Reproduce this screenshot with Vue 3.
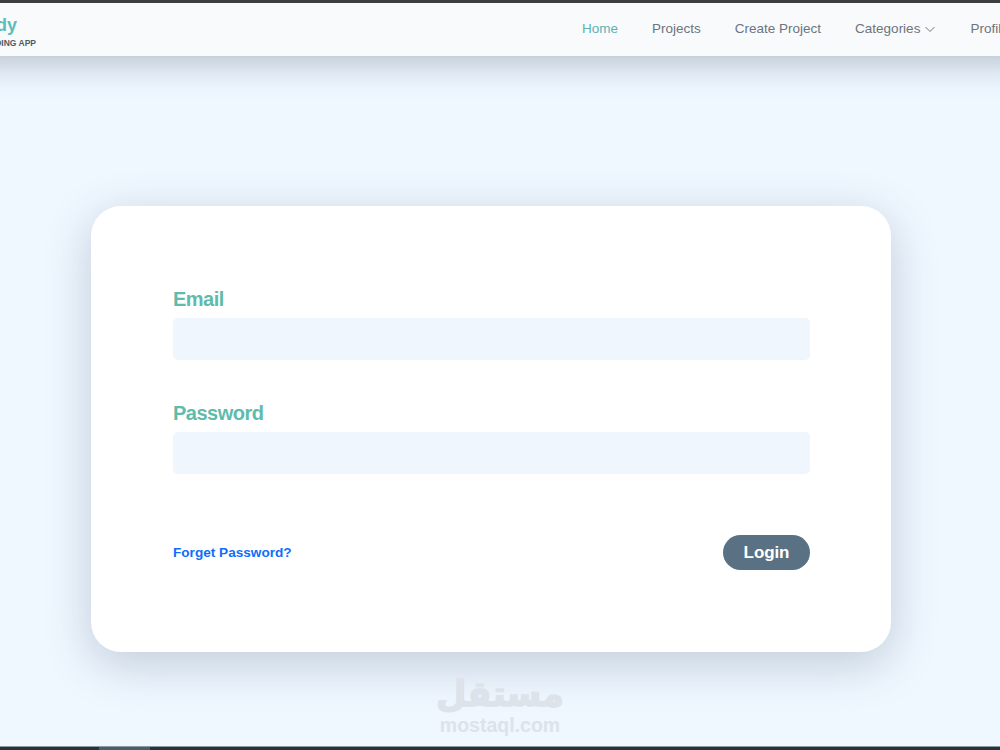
<template>
  <div class="page">
    <div class="top-strip"></div>

    <header class="navbar">
      <a class="logo" href="#">
        <span class="logo__name">Fundy</span>
        <span class="logo__tag">CROWDFUNDING APP</span>
      </a>
      <nav class="nav">
        <a
          v-for="link in links"
          :key="link.label"
          class="nav__link"
          :class="{ 'nav__link--active': link.active }"
          href="#"
        >
          {{ link.label }}
          <svg v-if="link.caret" class="nav__caret" width="12" height="12" viewBox="0 0 12 12" fill="none">
            <path d="M1.5 4 L6 8.5 L10.5 4" stroke="#6f777d" stroke-width="1" />
          </svg>
        </a>
      </nav>
    </header>

    <main class="main">
      <form class="card" @submit.prevent>
        <label class="field">
          <span class="field__label">Email</span>
          <input v-model="email" class="field__input" type="email" />
        </label>
        <label class="field">
          <span class="field__label">Password</span>
          <input v-model="password" class="field__input" type="password" />
        </label>
        <div class="card__footer">
          <a class="forget" href="#">Forget Password?</a>
          <button class="login" type="submit">Login</button>
        </div>
      </form>
    </main>

    <div class="watermark">
      <span class="watermark__ar">مستقل</span>
      <span class="watermark__en">mostaql.com</span>
    </div>

    <div class="taskbar">
      <span class="taskbar__start"></span>
      <span class="taskbar__item"></span>
    </div>
  </div>
</template>

<script setup>
import { ref } from "vue";

const email = ref("");
const password = ref("");

const links = [
  { label: "Home", active: true },
  { label: "Projects" },
  { label: "Create Project" },
  { label: "Categories", caret: true },
  { label: "Profile" },
];
</script>

<style>
html,
body {
  margin: 0;
  overflow: hidden;
}
</style>

<style scoped>
.page {
  position: relative;
  display: flex;
  flex-direction: column;
  width: 1000px;
  height: 750px;
  overflow: hidden;
  background: #eff7ff;
  font-family: "Liberation Sans", Arial, sans-serif;
}

.top-strip {
  flex: none;
  height: 3px;
  background: #3d3c3a;
}

/* wider than the page so the shadow does not fade at the sides */
.navbar {
  position: relative;
  z-index: 2;
  flex: none;
  display: flex;
  align-items: center;
  width: 1080px;
  height: 53px;
  margin-left: -40px;
  background: #f8fafc;
  box-shadow: 0 4px 36px rgba(60, 80, 100, 0.38);
}

/* the logo starts off-screen on the left, as in the reference */
.logo {
  display: flex;
  flex-direction: column;
  flex: none;
  width: 672px;
  margin-left: -50px;
  text-decoration: none;
}

.logo__name {
  width: 107px;
  margin-top: 3px;
  text-align: right;
  font-size: 18px;
  font-weight: 700;
  line-height: 22px;
  color: #5cbdb9;
}

.logo__tag {
  width: 126px;
  margin-top: 2px;
  text-align: right;
  font-size: 8.5px;
  font-weight: 700;
  line-height: 11px;
  white-space: nowrap;
  color: #4f5b62;
}

.nav {
  display: flex;
  flex: none;
  gap: 34px;
  margin-top: -2px;
}

.nav__link {
  display: flex;
  align-items: center;
  gap: 4px;
  font-size: 13.5px;
  color: #6c757d;
  text-decoration: none;
  white-space: nowrap;
}

.nav__link--active {
  color: #5cb3b5;
}

.main {
  flex: 1;
  padding: 150px 0 0 91px;
}

.card {
  box-sizing: border-box;
  width: 800px;
  height: 446px;
  padding: 82px 81px 0 82px;
  background: #fff;
  border-radius: 30px;
  box-shadow: 0 12px 46px rgba(60, 85, 110, 0.26);
}

.field {
  display: block;
  margin-bottom: 42px;
}

.field__label {
  display: block;
  height: 30px;
  font-size: 20px;
  font-weight: 700;
  line-height: 22px;
  letter-spacing: -0.5px;
  color: #5fbbab;
}

.field__input {
  display: block;
  box-sizing: border-box;
  width: 100%;
  height: 42px;
  border: 0;
  border-radius: 5px;
  outline: 0;
  background: #eff6fd;
}

.card__footer {
  display: flex;
  align-items: center;
  justify-content: space-between;
  margin-top: 61px;
}

.forget {
  font-size: 13.6px;
  font-weight: 700;
  color: #0d6efd;
  text-decoration: none;
}

.login {
  width: 87px;
  height: 35px;
  padding: 0;
  border: 0;
  border-radius: 18px;
  background: #5a7184;
  font-family: inherit;
  font-size: 17px;
  font-weight: 700;
  letter-spacing: -0.1px;
  color: #fff;
}

.watermark {
  position: absolute;
  left: 430px;
  top: 672px;
  display: flex;
  flex-direction: column;
  align-items: center;
  width: 140px;
  color: #dce3eb;
}

.watermark__ar {
  font-family: "DejaVu Sans", sans-serif;
  font-size: 35px;
  font-weight: 700;
  line-height: 44px;
  -webkit-text-stroke: 1.5px #dce3eb;
}

.watermark__en {
  font-size: 19.5px;
  font-weight: 700;
  line-height: 19px;
}

.taskbar {
  position: absolute;
  left: 0;
  right: 0;
  bottom: 0;
  display: flex;
  height: 4px;
  background: #263238;
  border-top: 1px solid #8a99a3;
  box-sizing: border-box;
}

.taskbar__start {
  width: 99px;
}

.taskbar__item {
  width: 51px;
  background: #4c5d6b;
}
</style>
